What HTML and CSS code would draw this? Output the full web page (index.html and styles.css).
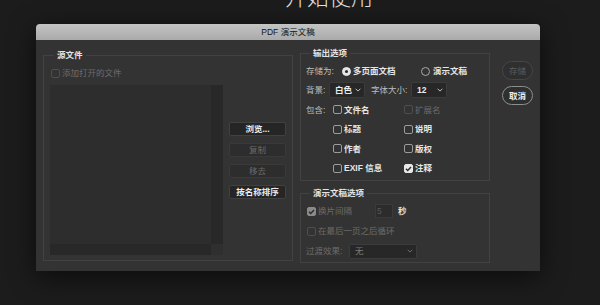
FILE: index.html
```html
<!DOCTYPE html>
<html lang="zh">
<head>
    <meta charset="UTF-8">
    <meta name="viewport" content="width=device-width, initial-scale=1.0">
    <title>PDF 演示文稿</title>
    <link rel="stylesheet" href="styles.css">
</head>
<body>
    <h1 class="backdrop-title">开始使用</h1>

    <div class="dialog">
        <div class="titlebar">PDF 演示文稿</div>
        <div class="dialog-body">

            <fieldset class="group source">
                <legend>源文件</legend>
                <label class="check dim"><span class="box"></span>添加打开的文件</label>
                <div class="source-main">
                    <div class="file-list">
                        <div class="list-area"></div>
                        <div class="vscroll"></div>
                        <div class="hscroll"></div>
                        <div class="corner"></div>
                    </div>
                    <div class="file-actions">
                        <button class="btn">浏览...</button>
                        <button class="btn" disabled>复制</button>
                        <button class="btn" disabled>移去</button>
                        <button class="btn">按名称排序</button>
                    </div>
                </div>
            </fieldset>

            <div class="options">
                <fieldset class="group output">
                    <legend>输出选项</legend>
                    <div class="save-row">
                        <span class="label">存储为:</span>
                        <span class="radio on"></span>
                        <span class="opt">多页面文档</span>
                        <span class="radio"></span>
                        <span class="opt">演示文稿</span>
                    </div>
                    <div class="style-row">
                        <span class="label bg-label">背景:</span>
                        <div class="select bg-select">白色
                            <svg class="chev" viewBox="0 0 6 4"><path d="M0.6 0.7L3 3.1 5.4 0.7"/></svg>
                        </div>
                        <span class="label size-label">字体大小:</span>
                        <div class="select size-select">12
                            <svg class="chev" viewBox="0 0 6 4"><path d="M0.6 0.7L3 3.1 5.4 0.7"/></svg>
                        </div>
                    </div>
                    <div class="include-grid">
                        <span class="label">包含:</span>
                        <label class="check"><span class="box"></span>文件名</label>
                        <label class="check dim"><span class="box"></span>扩展名</label>
                        <span></span>
                        <label class="check"><span class="box"></span>标题</label>
                        <label class="check"><span class="box"></span>说明</label>
                        <span></span>
                        <label class="check"><span class="box"></span>作者</label>
                        <label class="check"><span class="box"></span>版权</label>
                        <span></span>
                        <label class="check"><span class="box"></span>EXIF 信息</label>
                        <label class="check"><span class="box checked"><svg viewBox="0 0 9 9"><path d="M2 4.7l1.7 1.7L7 2.9"/></svg></span>注释</label>
                    </div>
                </fieldset>

                <fieldset class="group slideshow">
                    <legend>演示文稿选项</legend>
                    <div class="interval-row">
                        <label class="check dim"><span class="box checked"><svg viewBox="0 0 9 9"><path d="M2 4.7l1.7 1.7L7 2.9"/></svg></span>换片间隔</label>
                        <span class="num">5</span>
                        <span class="unit">秒</span>
                    </div>
                    <div class="loop-row">
                        <label class="check dim"><span class="box"></span>在最后一页之后循环</label>
                    </div>
                    <div class="transition-row">
                        <span class="label dim-label">过渡效果:</span>
                        <div class="select fx-select">无
                            <svg class="chev" viewBox="0 0 6 4"><path d="M0.6 0.7L3 3.1 5.4 0.7"/></svg>
                        </div>
                    </div>
                </fieldset>
            </div>

            <div class="dialog-actions">
                <button class="pill" disabled>存储</button>
                <button class="pill">取消</button>
            </div>

        </div>
    </div>
</body>
</html>
```

FILE: styles.css
```css
* {
    margin: 0;
    padding: 0;
    box-sizing: border-box;
}

html, body {
    width: 600px;
    height: 305px;
    overflow: hidden;
}

body {
    background-color: #1c1c1c;
    font-family: "Liberation Sans", "Noto Sans CJK SC", sans-serif;
    font-size: 8.5px;
    line-height: 14px;
    color: #dcdcdc;
}

.backdrop-title {
    font-family: "Noto Sans CJK SC", sans-serif;
    font-weight: 300;
    font-size: 22px;
    line-height: 22px;
    color: #e2e2e2;
    margin: -16px 0 0 285px;
}

.dialog {
    width: 504px;
    margin: 18px 0 0 36px;
    border-radius: 4px 4px 0 0;
    overflow: hidden;
    box-shadow: 0 6px 26px rgba(0, 0, 0, 0.6);
}

.titlebar {
    height: 16px;
    line-height: 16px;
    text-align: center;
    background: linear-gradient(#c4c4c4, #aaaaaa);
    color: #141414;
}

.dialog-body {
    height: 231px;
    background-color: #333333;
    display: flex;
    align-items: flex-start;
    padding: 8px 0 0 7px;
}

/* group boxes */

.group {
    border: 1px solid #424242;
    margin: 0;
    min-width: 0;
}

.group legend {
    padding: 0 3px;
    margin-left: 4px;
    font-weight: bold;
    color: #e4e4e4;
    line-height: 14px;
}

.label {
    color: #bdbdbd;
    white-space: nowrap;
}

.check {
    display: flex;
    align-items: center;
    height: 14px;
    color: #e6e6e6;
    font-weight: bold;
    white-space: nowrap;
}

.check.dim {
    color: #6c6c6c;
    font-weight: normal;
}

.box {
    width: 9px;
    height: 9px;
    border: 1px solid #9c9c9c;
    border-radius: 2px;
    margin-right: 2px;
    flex: none;
    display: flex;
    align-items: center;
    justify-content: center;
}

.check.dim .box {
    border-color: #4e4e4e;
}

.box.checked {
    background-color: #e8e8e8;
    border-color: #e8e8e8;
}

.check.dim .box.checked {
    background-color: #8a8a8a;
    border-color: #8a8a8a;
}

.box svg {
    width: 9px;
    height: 9px;
    flex: none;
}

.box svg path {
    fill: none;
    stroke: #2c2c2c;
    stroke-width: 1.4;
}

.radio {
    width: 9px;
    height: 9px;
    border-radius: 50%;
    border: 1px solid #a8a8a8;
    display: flex;
    align-items: center;
    justify-content: center;
}

.radio.on {
    background-color: #e6e6e6;
    border-color: #e6e6e6;
}

.radio.on::after {
    content: "";
    width: 3px;
    height: 3px;
    border-radius: 50%;
    background-color: #2b2b2b;
}

.opt {
    color: #e6e6e6;
    font-weight: bold;
}

.select {
    height: 16px;
    display: flex;
    align-items: center;
    justify-content: space-between;
    padding: 0 3px 0 5px;
    background-color: #272727;
    border: 1px solid #3b3b3b;
    border-radius: 2px;
    color: #ececec;
    font-weight: bold;
}

.chev {
    width: 6px;
    height: 4px;
}

.chev path {
    fill: none;
    stroke: #bdbdbd;
    stroke-width: 1;
}

/* source files */

.source {
    width: 250px;
    height: 213px;
    padding: 4px 6px 5px 6px;
    display: flex;
    flex-direction: column;
}

.source > .check {
    margin-left: 1px;
}

.source-main {
    display: flex;
    flex: 1;
    margin-top: 5px;
}

.file-list {
    width: 173px;
    display: grid;
    grid-template-columns: 1fr 12px;
    grid-template-rows: 1fr 11px;
    background-color: #2d2d2d;
}

.vscroll, .hscroll {
    background-color: #282828;
}

.corner {
    background-color: #2f2f2f;
}

.file-actions {
    display: flex;
    flex-direction: column;
    gap: 7px;
    width: 57px;
    margin: 37px 0 0 6px;
}

.btn {
    height: 14px;
    font: inherit;
    font-weight: bold;
    line-height: 12px;
    color: #ececec;
    background-color: #252525;
    border: 1px solid #414141;
    border-radius: 2px;
}

.btn:disabled {
    color: #6a6a6a;
    font-weight: normal;
    background-color: #2d2d2d;
    border-color: #3a3a3a;
}

/* output options */

.options {
    width: 190px;
    margin: -2px 0 0 7px;
    display: flex;
    flex-direction: column;
    gap: 5px;
}

.output {
    height: 135px;
    padding: 2px 5px 0 5px;
}

.save-row {
    display: grid;
    grid-template-columns: 36px 11px 68px 12px auto;
    align-items: center;
    height: 18px;
}

.style-row {
    display: flex;
    align-items: center;
    height: 20px;
}

.bg-label {
    width: 23px;
}

.bg-select {
    width: 36px;
}

.size-label {
    width: 40px;
    margin-left: 6px;
}

.size-select {
    width: 36px;
}

.include-grid {
    display: grid;
    grid-template-columns: 27px 71px auto;
    grid-auto-rows: 19.5px;
    align-items: center;
}

/* slideshow options */

.slideshow {
    height: 77px;
    padding: 1px 5px 0 5px;
}

.slideshow .check {
    margin-left: 1px;
}

.interval-row {
    display: grid;
    grid-template-columns: 69px 18px auto;
    align-items: center;
    height: 20px;
}

.num {
    height: 14px;
    line-height: 12px;
    padding-left: 1px;
    border: 1px solid #3a3a3a;
    background-color: #2c2c2c;
    color: #585858;
}

.unit {
    margin-left: 5px;
    color: #e0e0e0;
    font-weight: bold;
}

.loop-row {
    display: flex;
    align-items: center;
    height: 20px;
}

.transition-row {
    display: flex;
    align-items: center;
    height: 20px;
}

.dim-label {
    width: 43px;
    color: #6c6c6c;
}

.fx-select {
    width: 68px;
    height: 15px;
    color: #7a7a7a;
    font-weight: normal;
}

.fx-select .chev path {
    stroke: #6c6c6c;
}

/* dialog buttons */

.dialog-actions {
    display: flex;
    flex-direction: column;
    gap: 6px;
    width: 31px;
    margin: 13px 0 0 12px;
}

.pill {
    height: 19px;
    font: inherit;
    font-weight: bold;
    color: #ececec;
    background-color: #2f2f2f;
    border: 1px solid #8e8e8e;
    border-radius: 10px;
}

.pill:disabled {
    color: #5c5c5c;
    font-weight: normal;
    border-color: #464646;
}
```
